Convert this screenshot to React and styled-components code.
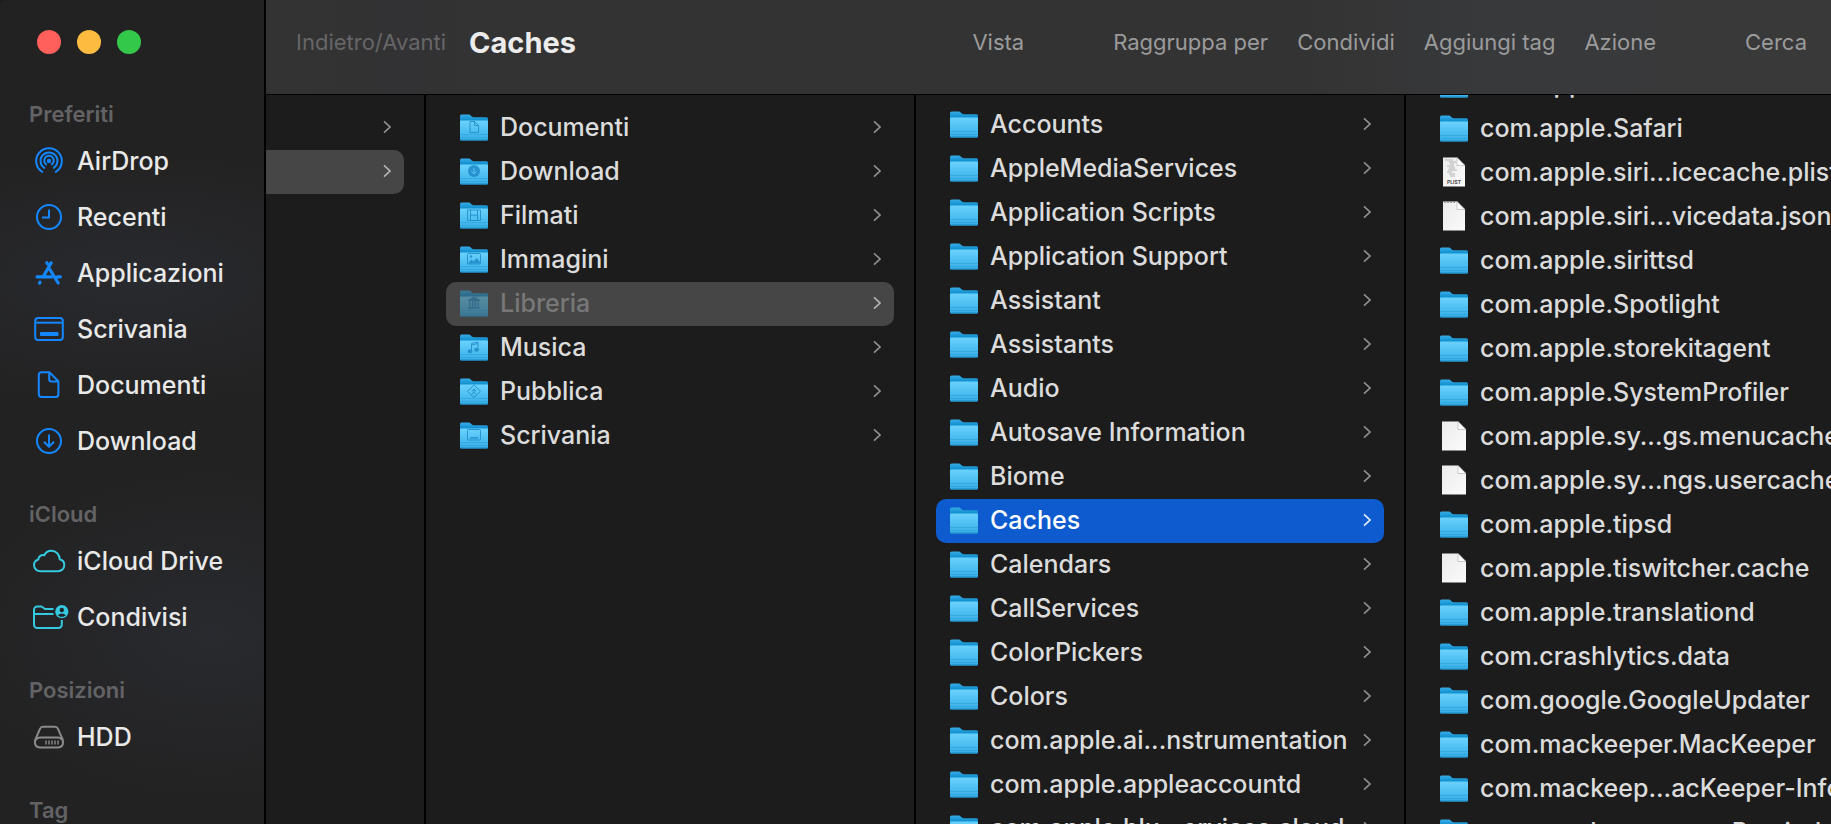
import React from "react";
import styled, { createGlobalStyle } from "styled-components";

const favourites = [
    { label: "AirDrop", icon: "airdrop" },
    { label: "Recenti", icon: "clock" },
    { label: "Applicazioni", icon: "apps" },
    { label: "Scrivania", icon: "desktop" },
    { label: "Documenti", icon: "document" },
    { label: "Download", icon: "download" }
];

const cloudItems = [
    { label: "iCloud Drive", icon: "cloud" },
    { label: "Condivisi", icon: "shared" }
];

const homeFolders = [
    { name: "Documenti", glyph: "document" },
    { name: "Download", glyph: "download" },
    { name: "Filmati", glyph: "movie" },
    { name: "Immagini", glyph: "picture" },
    { name: "Libreria", glyph: "library", state: "open", hidden: true },
    { name: "Musica", glyph: "music" },
    { name: "Pubblica", glyph: "public" },
    { name: "Scrivania", glyph: "desktop" }
];

const libraryFolders = [
    "Accounts", "AppleMediaServices", "Application Scripts", "Application Support", "Assistant",
    "Assistants", "Audio", "Autosave Information", "Biome", "Caches", "Calendars", "CallServices",
    "ColorPickers", "Colors", "com.apple.ai...nstrumentation", "com.apple.appleaccountd",
    "com.apple.blu...ervices.cloud"
].map((name) => ({ name, state: name === "Caches" ? "active" : undefined }));

const cacheEntries = [
    { name: "com.apple.routined" },
    { name: "com.apple.Safari" },
    { name: "com.apple.siri...icecache.plist", kind: "plist" },
    { name: "com.apple.siri...vicedata.json", kind: "json" },
    { name: "com.apple.sirittsd" },
    { name: "com.apple.Spotlight" },
    { name: "com.apple.storekitagent" },
    { name: "com.apple.SystemProfiler" },
    { name: "com.apple.sy...gs.menucache", kind: "file" },
    { name: "com.apple.sy...ngs.usercache", kind: "file" },
    { name: "com.apple.tipsd" },
    { name: "com.apple.tiswitcher.cache", kind: "file" },
    { name: "com.apple.translationd" },
    { name: "com.crashlytics.data" },
    { name: "com.google.GoogleUpdater" },
    { name: "com.mackeeper.MacKeeper" },
    { name: "com.mackeep...acKeeper-Info" },
    { name: "com.mackeep...eper.Reminder" }
];

// Sidebar icons, all drawn on a 36x30 box
const sidebarShapes = {
    airdrop: (
        <>
            <circle cx="18" cy="15" r="2.2" fill="currentColor" stroke="none" />
            <path d="M15.800 18.800a4.800 4.800 0 1 1 4.400 0M13.800 22.300a8.500 8.500 0 1 1 8.400 0M11.900 26.300a12.800 12.800 0 1 1 12.200 0" />
        </>
    ),
    clock: (
        <>
            <circle cx="18" cy="15" r="12" />
            <path d="M18 7.500v8h-7" />
        </>
    ),
    apps: (
        <g strokeWidth="3.200" strokeLinecap="round">
            <path d="M20.200 4.800l-8 14M15.800 4.800l.6 1M18.600 11l8.600 14M6 18.800h15M26.400 18.800h3M9 24.200l-.5.9" />
        </g>
    ),
    desktop: (
        <>
            <rect x="4.200" y="4" width="27.600" height="22" rx="3" />
            <path d="M4.200 8.700h27.600" />
            <rect x="9" y="18" width="18.500" height="4" rx="1" fill="currentColor" stroke="none" />
        </>
    ),
    document: (
        <path d="M10.600 2.200h7.800l9 9v13a2.800 2.800 0 0 1-2.800 2.800H10.600a2.800 2.800 0 0 1-2.800-2.800V5a2.800 2.800 0 0 1 2.800-2.800zM18.200 2.400v7a2 2 0 0 0 2 2h7" />
    ),
    download: (
        <>
            <circle cx="18" cy="15" r="12" />
            <path d="M18 8.500v12M13 15.800l5 5 5-5" />
        </>
    ),
    cloud: (
        <path d="M9.500 25.200h17.300c3.800 0 6.500-2.700 6.500-6 0-3-2-5.300-4.600-5.900-.1-5-3.700-8.500-8.200-8.500-3.300 0-6 1.800-7.200 4.500-2.800-.8-5.700 1-6 4.200-2.700.8-4.300 3-4.300 5.600 0 3.400 2.800 6.100 6.500 6.100z" />
    ),
    shared: (
        <>
            <path d="M22.500 7h-8.500l-3.500-2.500H6.300A3.300 3.300 0 0 0 3 7.800v14.900A3.300 3.300 0 0 0 6.300 26h21.200A3.300 3.300 0 0 0 30.800 22.700V18M3 12h19.500" />
            <circle cx="30.800" cy="9.700" r="6.600" fill="currentColor" stroke="none" />
            <circle cx="30.800" cy="8" r="2.200" fill="#222326" stroke="none" />
            <path d="M27 13.400c.5-2.300 7.100-2.300 7.600 0-2 1.900-5.600 1.900-7.600 0z" fill="#222326" stroke="none" />
        </>
    ),
    disk: (
        <>
            <path d="M12 4.800h12c1.500 0 2.400.6 3 2l4.500 10.300c.8 1.800.5 3 .5 3.500 0 3-1.800 4.800-4.800 4.800H8.800C5.800 25.400 4 23.600 4 20.600c0-.5-.3-1.700.5-3.500L9 6.800c.6-1.400 1.500-2 3-2z" />
            <path d="M4.800 18c1-1.700 2.500-2.400 4-2.400h18.400c1.500 0 3 .7 4 2.400" />
            <path d="M15 18.500v4M18 18.500v4M21 18.500v4M24 18.500v4M27 18.500v4" strokeWidth="1.400" />
        </>
    )
};

// Marks embossed on the front of the home folders
const folderGlyphs = {
    document: <path d="M10 9.500h4.500l4 4v7h-8.500zM14.500 9.500v4h4" />,
    download: (
        <>
            <circle cx="14" cy="15" r="6" fill="#1b87c6" stroke="none" />
            <path d="M14 12v5.500M11.500 15.500l2.500 2.500 2.500-2.500" stroke="#5cc4f4" />
        </>
    ),
    movie: <path d="M7.500 10h13v10.500h-13zM10.500 10v10.500M17.500 10v10.500M10.500 15.200h7" />,
    picture: (
        <>
            <rect x="7.500" y="9.500" width="13" height="10.500" rx="1" />
            <path d="M8 19.500l3.500-4 2 2 3-3.500 4 4.500v1z" fill="#1b87c6" stroke="none" />
            <circle cx="11" cy="12.500" r="1.200" fill="#1b87c6" stroke="none" />
        </>
    ),
    library: (
        <>
            <path d="M8 12.500l6-3.500 6 3.500z" fill="#1b87c6" />
            <path d="M10 13v6.500M12.700 13v6.500M15.300 13v6.500M18 13v6.500M8 20h12" strokeWidth="1.400" />
        </>
    ),
    music: (
        <>
            <path d="M11.500 19v-7.500l6.500-1.500v7.500M11.500 13l6.500-1.500" />
            <ellipse cx="10" cy="19.300" rx="1.900" ry="1.500" fill="#1b87c6" />
            <ellipse cx="16.500" cy="17.800" rx="1.900" ry="1.500" fill="#1b87c6" />
        </>
    ),
    public: (
        <>
            <path d="M14 9l6.500 6.300-6.500 6.300-6.500-6.300z" />
            <path d="M14.500 12.500l-.7 3.500 2 2.500M13.800 16l-2 2.500M11.800 14.500l2.500-.8 2 1.300" />
        </>
    ),
    desktop: (
        <>
            <rect x="7.500" y="9.500" width="13" height="10.500" rx="1" />
            <path d="M10 17.800h8" strokeWidth="1.400" />
        </>
    )
};

const FolderIcon = ({ glyph, dimmed }) => (
    <EntryIcon viewBox="0 0 28 30" $dimmed={dimmed} aria-hidden="true">
        <path d="M0 4a1.500 1.500 0 0 1 1.500-1.500H8.500c1 0 1.500.3 2.200 1 1.200 1.300 1.700 1.700 3.300 1.700h12.500A1.500 1.500 0 0 1 28 6.700V20H0z" fill="url(#folderBack)" />
        <path d="M0 9.500a1 1 0 0 1 1-1h26a1 1 0 0 1 1 1V27a1.500 1.500 0 0 1-1.500 1.500h-25A1.500 1.500 0 0 1 0 27z" fill="url(#folderFront)" />
        <path d="M0 22.500h28M0 25.500h28" stroke="#2a9fdb" strokeWidth="1" opacity=".55" />
        <path d="M.5 28h27" stroke="#1d8bc5" strokeWidth="1" />
        <g fill="none" stroke="#1b87c6" strokeWidth="1" opacity=".8">{glyph && folderGlyphs[glyph]}</g>
    </EntryIcon>
);

const FileIcon = ({ kind }) => {
    const right = kind === "file" ? 26 : 25;
    const left = kind === "file" ? 2 : 3;

    return (
        <EntryIcon viewBox="0 0 28 30" aria-hidden="true">
            <path d={`M${left} .5H${right - 8}l8 8V29.500H${left}z`} fill="url(#paper)" />
            <path d={`M${right - 8} .5l8 8h-8z`} fill="#ffffff" stroke="#a9a9a9" strokeWidth=".6" />
            {kind === "json" && <path d="M4 1.500h11" stroke="#a0a0a0" strokeDasharray="2 1" />}
            {kind === "plist" && (
                <>
                    <path d="M5 3h8M9 5h7M10 7h4M7 9h7M9 11h6M8 13h9M7 15h5M9 17h6M10 19h5" stroke="#b4b4b4" />
                    <IconCaption x="14" y="27" textAnchor="middle">PLIST</IconCaption>
                </>
            )}
        </EntryIcon>
    );
};

const Arrow = ({ state }) => (
    <Chevron viewBox="0 0 8 14" $state={state} aria-hidden="true">
        <path d="M1 1.300l6 5.700-6 5.700" fill="none" stroke="currentColor" strokeWidth="1.600" />
    </Chevron>
);

const Entry = ({ name, kind, glyph, state, hidden, isFolder }) => (
    <li>
        <EntryButton type="button" $state={state}>
            {kind ? <FileIcon kind={kind} /> : <FolderIcon glyph={glyph} dimmed={hidden} />}
            <EntryName $dimmed={hidden}>{name}</EntryName>
            {isFolder && <Arrow state={state} />}
        </EntryButton>
    </li>
);

const SidebarSection = ({ title, items, tone }) => (
    <section>
        <SectionTitle>{title}</SectionTitle>
        <PlainList>
            {items.map((item) => (
                <li key={item.label}>
                    <SidebarLink href="#">
                        <SidebarIcon viewBox="0 0 36 30" $tone={tone} aria-hidden="true">
                            {sidebarShapes[item.icon]}
                        </SidebarIcon>
                        {item.label}
                    </SidebarLink>
                </li>
            ))}
        </PlainList>
    </section>
);

export default function App() {
    return (
        <>
            <GlobalStyle />
            <SharedGradients width="0" height="0" aria-hidden="true">
                <defs>
                    <linearGradient id="folderBack" x1="0" y1="0" x2="0" y2="1">
                        <stop offset="0" stopColor="#35ade6" />
                        <stop offset=".3" stopColor="#1590d0" />
                    </linearGradient>
                    <linearGradient id="folderFront" x1="0" y1="0" x2="0" y2="1">
                        <stop offset="0" stopColor="#6ad2fc" />
                        <stop offset="1" stopColor="#36aee6" />
                    </linearGradient>
                    <linearGradient id="paper" x1="0" y1="0" x2="1" y2="1">
                        <stop offset="0" stopColor="#ebebeb" />
                        <stop offset="1" stopColor="#fbfbfb" />
                    </linearGradient>
                </defs>
            </SharedGradients>

            <Window>
                <Sidebar>
                    <WindowControls>
                        <ControlDot type="button" aria-label="Chiudi" $color="#ff605c" />
                        <ControlDot type="button" aria-label="Riduci" $color="#fdbc40" />
                        <ControlDot type="button" aria-label="Ingrandisci" $color="#34c84a" />
                    </WindowControls>
                    <Sections>
                        <SidebarSection title="Preferiti" items={favourites} tone="#1487ff" />
                        <SidebarSection title="iCloud" items={cloudItems} tone="#35c9e0" />
                        <SidebarSection title="Posizioni" items={[{ label: "HDD", icon: "disk" }]} tone="#8b8b8d" />
                        <SidebarSection title="Tag" items={[]} />
                    </Sections>
                </Sidebar>

                <Main>
                    <Toolbar>
                        <ToolbarButton type="button" disabled>Indietro/Avanti</ToolbarButton>
                        <Title>Caches</Title>
                        <ToolbarGroup>
                            <ToolbarButton type="button">Vista</ToolbarButton>
                        </ToolbarGroup>
                        <ToolbarGroup>
                            <ToolbarButton type="button">Raggruppa per</ToolbarButton>
                            <ToolbarButton type="button">Condividi</ToolbarButton>
                            <ToolbarButton type="button">Aggiungi tag</ToolbarButton>
                            <ToolbarButton type="button">Azione</ToolbarButton>
                        </ToolbarGroup>
                        <ToolbarButton type="button">Cerca</ToolbarButton>
                    </Toolbar>

                    <Columns>
                        <ParentColumn>
                            <ParentRow type="button" aria-label="Condivisa"><Arrow /></ParentRow>
                            <ParentRow type="button" aria-label="Inizio" $open><Arrow state="open" /></ParentRow>
                        </ParentColumn>
                        <Column>
                            <EntryList $top="11px">
                                {homeFolders.map((entry) => <Entry key={entry.name} isFolder {...entry} />)}
                            </EntryList>
                        </Column>
                        <Column>
                            <EntryList $top="8px">
                                {libraryFolders.map((entry) => <Entry key={entry.name} isFolder {...entry} />)}
                            </EntryList>
                        </Column>
                        <Column>
                            {/* this list is scrolled, its first row is mostly under the toolbar */}
                            <EntryList $top="-32px">
                                {cacheEntries.map((entry) => <Entry key={entry.name} {...entry} />)}
                            </EntryList>
                        </Column>
                    </Columns>
                </Main>
            </Window>
        </>
    );
}

const GlobalStyle = createGlobalStyle`
    * {
        box-sizing: border-box;
    }

    body {
        margin: 0;
        background: #1c1c1c;
        color: #dcdcdc;
        font-family: Inter, "Liberation Sans", sans-serif;
        overflow: hidden;
    }

    button {
        font: inherit;
        color: inherit;
        border: none;
        padding: 0;
        background: none;
    }
`;

const SharedGradients = styled.svg`
    display: block;
`;

const Window = styled.div`
    display: flex;
    height: 100vh;
    overflow: hidden;
`;

const Sidebar = styled.nav`
    flex: 0 0 266px;
    border-right: 2px solid #000;
    border-top-left-radius: 6px;
    background:
        radial-gradient(ellipse 300px 130px at 50% 34%, #292a2f, transparent),
        radial-gradient(ellipse 260px 170px at 80% 77%, #292a2f, transparent),
        #222222;
    overflow: hidden;
`;

const WindowControls = styled.div`
    display: flex;
    gap: 16px;
    padding: 30px 37px 41px;
`;

const ControlDot = styled.button`
    width: 24px;
    height: 24px;
    border-radius: 50%;
    background: ${(props) => props.$color};
`;

const Sections = styled.div`
    display: flex;
    flex-direction: column;
    gap: 26px;
`;

const SectionTitle = styled.h2`
    margin: 0;
    padding-left: 29px;
    color: #636365;
    font-size: 22px;
    font-weight: 600;
    line-height: 38px;
`;

const PlainList = styled.ul`
    list-style: none;
    margin: 0;
    padding: 0;
`;

const SidebarLink = styled.a`
    display: flex;
    align-items: center;
    gap: 10px;
    height: 56px;
    padding-left: 31px;
    color: #e9e9e9;
    font-size: 25px;
    font-weight: 500;
    text-decoration: none;
    white-space: nowrap;
`;

const SidebarIcon = styled.svg`
    width: 36px;
    height: 30px;
    fill: none;
    stroke: currentColor;
    stroke-width: 2;
    stroke-linejoin: round;
    color: ${(props) => props.$tone};
    overflow: visible;
`;

const Main = styled.main`
    flex: 1;
    min-width: 0;
    display: flex;
    flex-direction: column;
`;

const Toolbar = styled.header`
    flex: 0 0 95px;
    display: flex;
    align-items: center;
    padding: 0 24px 10px 30px;
    border-bottom: 1px solid #000;
    background: linear-gradient(90deg, #333333 0%, #323234 9%, #333333 15%, #333333 66%, #38393b 78%, #393939 100%);
`;

const Title = styled.h1`
    flex: 1;
    margin: 0 0 0 23px;
    color: #ececec;
    font-size: 29px;
    font-weight: 700;
`;

const ToolbarGroup = styled.div`
    display: flex;
    gap: 29px;
    margin-right: 89px;
`;

const ToolbarButton = styled.button`
    color: #9b9b9c;
    font-size: 22px;
    white-space: nowrap;

    &:disabled {
        color: #666668;
    }
`;

const Columns = styled.div`
    flex: 1;
    min-height: 0;
    display: flex;
    overflow: hidden;
`;

const Column = styled.div`
    flex: 0 0 490px;
    border-right: 2px solid #000;
    overflow: hidden;

    &:last-child {
        border-right: none;
    }
`;

const ParentColumn = styled(Column)`
    flex-basis: 160px;
    padding: 11px 20px 0 0;
`;

const ParentRow = styled.button`
    display: flex;
    align-items: center;
    justify-content: flex-end;
    width: 100%;
    height: 44px;
    padding: 0 13px 2px 0;
    border-radius: 0 10px 10px 0;
    background: ${(props) => (props.$open ? "#464646" : "none")};
`;

const EntryList = styled(PlainList)`
    margin-top: ${(props) => props.$top};
    padding: 0 20px;
`;

const rowColors = {
    open: "background: #464646;",
    active: "background: #0d5bce; color: #ffffff;"
};

const EntryButton = styled.button`
    display: flex;
    align-items: center;
    width: 100%;
    height: 44px;
    padding: 0 13px 2px 14px;
    border-radius: 10px;
    font-size: 25px;
    font-weight: 500;
    text-align: left;
    ${(props) => rowColors[props.$state]}
`;

const EntryIcon = styled.svg`
    flex: none;
    width: 28px;
    height: 30px;
    margin-right: 12px;
    opacity: ${(props) => (props.$dimmed ? 0.5 : 1)};
`;

const IconCaption = styled.text`
    fill: #4a4a4a;
    font-size: 5px;
    font-weight: 700;
`;

const EntryName = styled.span`
    flex: 1;
    min-width: 0;
    white-space: nowrap;
    color: ${(props) => (props.$dimmed ? "#787878" : "inherit")};
`;

const arrowColors = {
    open: "#b4b4b4",
    active: "#e6eefa"
};

const Chevron = styled.svg`
    flex: none;
    width: 8px;
    height: 14px;
    color: ${(props) => arrowColors[props.$state] || "#909090"};
`;
